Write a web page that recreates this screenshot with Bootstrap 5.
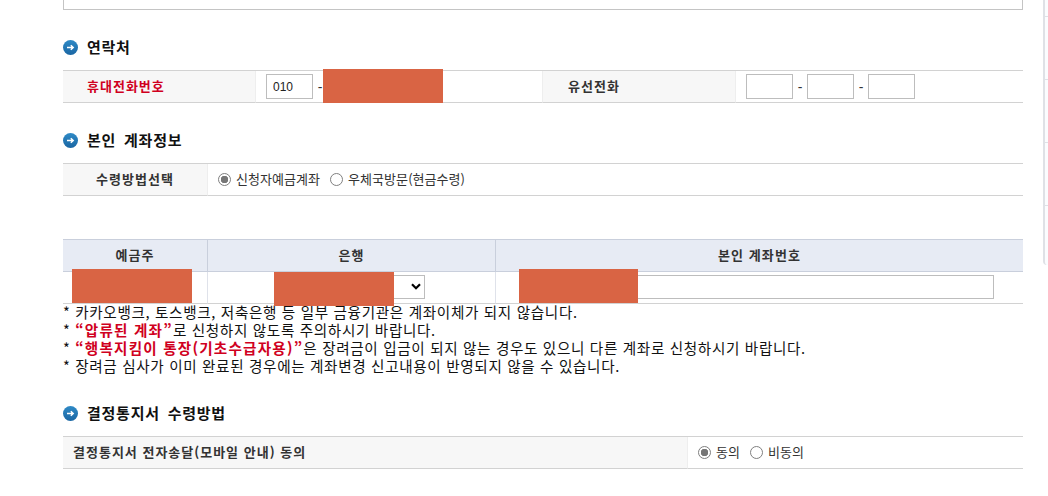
<!DOCTYPE html>
<html lang="ko">
<head>
<meta charset="utf-8">
<title>연락처 및 계좌정보</title>
<link href="https://cdn.jsdelivr.net/npm/bootstrap@5.3.0/dist/css/bootstrap.min.css" rel="stylesheet">
<style>
html,body{height:496px;overflow:hidden}
body{font-family:"Noto Sans CJK KR","Liberation Sans",sans-serif;font-size:13px;color:#222;background:#fff}
.pg-shell{padding-left:63px;width:1048px;height:496px}
.pg-main{width:960px;position:relative;flex:none}
.pg-rail{width:5px;height:265px;margin-left:20px;flex:none;background:#fbfcfe;border-left:2px solid #dfe1e6;border-bottom-left-radius:4px;padding-top:16px}
.pg-tick{height:1px;background:#dfe1e6;margin-bottom:62px}
.top-box{height:10px;border:1px solid #c4c4c4;border-top:0}
.sec-head{height:20px;margin:27px 0 13px;font-size:15px;line-height:20px;font-weight:700;color:#111;letter-spacing:.75px;word-spacing:3px;gap:9px}
.sec-head.third{margin-top:28px}
.sec-head svg{flex:none}
.sheet{table-layout:fixed;width:960px;margin:0;border-collapse:separate;border-spacing:0;border-top:1px solid #d2d2d2}
.sheet>tbody>tr>*,.sheet>thead>tr>*{height:32px;padding:0;border-bottom:1px solid #d2d2d2;border-right:1px solid #eee;vertical-align:middle;background:#fff;box-shadow:none;font-size:13px;color:#333;line-height:1}
.sheet>tbody>tr>*:last-child,.sheet>thead>tr>*:last-child{border-right:0}
.sheet>tbody>tr>th{background:#f7f7f7;font-weight:700;letter-spacing:1px;padding-bottom:2px}
.sheet>tbody>tr>td{padding-left:10px}
.lbl-wide{width:193px}.lbl-mid{width:288px}.lbl-tel{width:287px}
.lbl-narrow{width:145px}
.th-alert{color:#d0001e!important;padding-left:24px!important}
.th-pad{padding-left:25px!important}
.th-first{padding-left:10px!important}
.col-agree{width:625px}
.acct{border-top-color:#c9cfdc;margin-top:43px}
.acct>thead>tr>th{background:#e7ebf4;border-bottom-color:#c9cfdc;border-right-color:#c9cfdc;text-align:center;height:32px;font-weight:700;letter-spacing:1.1px;padding-bottom:2px}
.acct>tbody>tr>td{padding:0 0 2px;border-right-color:#dfe2ea;text-align:center}
.phone-in{width:47px;height:25px;flex:none;padding:0 6px;border:1px solid #bdbdbd;border-radius:0;font-size:12px;line-height:23px;color:#222;box-shadow:none;font-family:"Liberation Sans",sans-serif}
.dash-gap{width:14px;text-align:center;color:#333;font-size:14px;font-family:"Liberation Sans",sans-serif}
.pick-in{width:147px;height:24px;padding:0 20px 0 4px;border:1px solid #bdbdbd;border-radius:0;font-size:12px;background-image:url("data:image/svg+xml,%3csvg xmlns='http://www.w3.org/2000/svg' viewBox='0 0 10 7'%3e%3cpath d='M1 1.2l4 4 4-4' fill='none' stroke='%23000' stroke-width='2.2'/%3e%3c/svg%3e");background-position:right 3px center;background-size:10px 7px;display:inline-block;vertical-align:middle}
.num-in{width:469px;height:24px;padding:0 6px;border:1px solid #bdbdbd;border-radius:0;display:inline-block;font-size:12px;vertical-align:middle}
.radio-row{gap:5px;font-size:13px;color:#333;line-height:1;letter-spacing:.05px}
.radio-dot{appearance:none;width:13px;height:13px;margin:0;flex:none;border:1px solid #808080;border-radius:50%;background:#fff}
.radio-dot:checked{background:#fff radial-gradient(circle,#777 0 3.5px,#fff 4px);border-color:#808080}
.radio-next{margin-left:5px}
.radio-txt{margin:0 0 2px}
.notes{margin:-1px 0 0;padding:0;list-style:none;font-size:14.6px;line-height:18px;color:#111;height:72px;letter-spacing:.65px}
.notes b{color:#d0001e;font-weight:700;letter-spacing:1.2px}
.blot{position:absolute;width:120px;background:#d96444}
.blot-a{left:260px;top:69px;height:34px}
.blot-b{left:9px;top:269px;height:34px}
.blot-c{left:211px;top:272px;height:34px}
.blot-d{left:456px;top:269px;height:34px;width:119px}
</style>
</head>
<body>
<svg width="0" height="0" class="position-absolute">
  <defs>
    <linearGradient id="orb" x1="0" y1="0" x2="0" y2="1"><stop offset="0" stop-color="#2f8ac6"/><stop offset="1" stop-color="#1a66a3"/></linearGradient>
    <symbol id="go" viewBox="0 0 15 15">
      <circle cx="7.5" cy="7.5" r="7.5" fill="url(#orb)"/>
      <path d="M4 7.5h6M7.8 5.2l2.4 2.3-2.4 2.3" fill="none" stroke="#fff" stroke-width="1.5"/>
    </symbol>
  </defs>
</svg>
<div class="pg-shell d-flex">
  <main class="pg-main">
    <div class="top-box"></div>

    <h2 class="sec-head d-flex align-items-center"><svg width="15" height="15"><use href="#go"/></svg><span>연락처</span></h2>
    <table class="table sheet">
      <colgroup><col class="lbl-wide"><col class="lbl-tel"><col class="lbl-wide"><col></colgroup>
      <tbody><tr>
        <th class="th-alert">휴대전화번호</th>
        <td><div class="d-flex align-items-center"><input class="form-control phone-in" value="010" aria-label="휴대전화 앞자리"><span class="dash-gap">-</span></div></td>
        <th class="th-pad">유선전화</th>
        <td><div class="d-flex align-items-center"><input class="form-control phone-in" aria-label="지역번호"><span class="dash-gap">-</span><input class="form-control phone-in" aria-label="국번"><span class="dash-gap">-</span><input class="form-control phone-in" aria-label="번호"></div></td>
      </tr></tbody>
    </table>

    <h2 class="sec-head d-flex align-items-center"><svg width="15" height="15"><use href="#go"/></svg><span>본인 계좌정보</span></h2>
    <table class="table sheet">
      <colgroup><col class="lbl-narrow"><col></colgroup>
      <tbody><tr>
        <th class="text-center">수령방법선택</th>
        <td><div class="d-flex align-items-center radio-row">
          <input class="radio-dot" type="radio" name="recv" checked aria-label="신청자예금계좌"><span class="radio-txt">신청자예금계좌</span>
          <input class="radio-dot radio-next" type="radio" name="recv" aria-label="우체국방문"><span class="radio-txt">우체국방문(현금수령)</span>
        </div></td>
      </tr></tbody>
    </table>

    <table class="table sheet acct">
      <colgroup><col class="lbl-narrow"><col class="lbl-mid"><col></colgroup>
      <thead><tr><th>예금주</th><th>은행</th><th>본인 계좌번호</th></tr></thead>
      <tbody><tr>
        <td></td>
        <td><select class="form-select pick-in" aria-label="은행"><option></option></select></td>
        <td><input class="form-control num-in" aria-label="계좌번호"></td>
      </tr></tbody>
    </table>
    <ul class="notes">
      <li>* 카카오뱅크, 토스뱅크, 저축은행 등 일부 금융기관은 계좌이체가 되지 않습니다.</li>
      <li>* <b>“압류된 계좌”</b>로 신청하지 않도록 주의하시기 바랍니다.</li>
      <li>* <b>“행복지킴이 통장(기초수급자용)”</b>은 장려금이 입금이 되지 않는 경우도 있으니 다른 계좌로 신청하시기 바랍니다.</li>
      <li>* 장려금 심사가 이미 완료된 경우에는 계좌변경 신고내용이 반영되지 않을 수 있습니다.</li>
    </ul>

    <h2 class="sec-head third d-flex align-items-center"><svg width="15" height="15"><use href="#go"/></svg><span>결정통지서 수령방법</span></h2>
    <table class="table sheet">
      <colgroup><col class="col-agree"><col></colgroup>
      <tbody><tr>
        <th class="th-first">결정통지서 전자송달(모바일 안내) 동의</th>
        <td><div class="d-flex align-items-center radio-row">
          <input class="radio-dot" type="radio" name="agree" checked aria-label="동의"><span class="radio-txt">동의</span>
          <input class="radio-dot radio-next" type="radio" name="agree" aria-label="비동의"><span class="radio-txt">비동의</span>
        </div></td>
      </tr></tbody>
    </table>

    <div class="blot blot-a"></div>
    <div class="blot blot-b"></div>
    <div class="blot blot-c"></div>
    <div class="blot blot-d"></div>
  </main>
  <aside class="pg-rail">
    <div class="pg-tick"></div><div class="pg-tick"></div><div class="pg-tick"></div><div class="pg-tick"></div>
  </aside>
</div>
<script src="https://cdn.jsdelivr.net/npm/bootstrap@5.3.0/dist/js/bootstrap.bundle.min.js"></script>
</body>
</html>
